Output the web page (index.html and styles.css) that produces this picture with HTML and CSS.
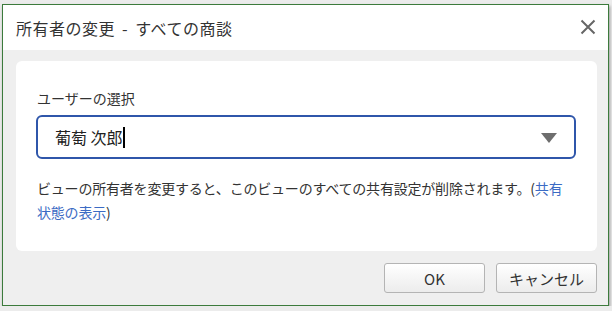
FILE: index.html
```html
<!DOCTYPE html>
<html lang="ja">
<head>
  <meta charset="UTF-8">
  <title>所有者の変更</title>
  <link rel="stylesheet" href="styles.css">
</head>
<body>
<div class="dlg">
  <div class="dlg-hd">
    <h1>所有者の変更 - すべての商談</h1>
    <span class="close"><svg width="16" height="16" viewBox="0 0 16 16"><path d="M1.5 1.5L14.5 14.5M14.5 1.5L1.5 14.5" stroke="#666" stroke-width="2" fill="none"/></svg></span>
  </div>
  <div class="dlg-bd">
    <div class="card">
      <p class="lbl">ユーザーの選択</p>
      <div class="sel">
        <span class="val">葡萄 次郎<span class="caret"></span></span>
        <span class="arrow"></span>
      </div>
      <p class="note">ビューの所有者を変更すると、このビューのすべての共有設定が削除されます。(<a href="#">共有状態の表示</a>)</p>
    </div>
    <div class="btns">
      <button type="button">OK</button>
      <button type="button">キャンセル</button>
    </div>
  </div>
</div>
</body>
</html>
```

FILE: styles.css
```css
*{margin:0;padding:0;box-sizing:border-box;}
body{
  background:#ececec;
  color:#333;
  font-family:"Noto Sans CJK JP","Noto Sans",sans-serif;
  font-size:14px;
}
.dlg{
  margin:4px 0 0 2px;
  width:607px;
  height:302px;
  border:1px solid #3c7b3c;
  background:#efefef;
  box-shadow:1px 2px 3px rgba(0,0,0,.35);
  display:flex;
  flex-direction:column;
}
.dlg-hd{
  height:45px;
  background:#fff;
  display:flex;
  align-items:center;
  justify-content:space-between;
  padding:0 12px 0 13px;
}
.dlg-hd h1{font-size:16px;font-weight:normal;color:#333;letter-spacing:.5px;word-spacing:3px;}
.close{display:flex;margin-top:-2px;}
.dlg-bd{flex:1;padding:11px 11px 12px 13px;display:flex;flex-direction:column;}
.card{
  background:#fff;
  border-radius:6px;
  height:190px;
  padding:27px 21px 0 20px;
}
.lbl{line-height:20px;margin-bottom:7px;padding-left:1px;}
.sel{
  height:44px;
  border:2px solid #2f56aa;
  border-radius:6px;
  display:flex;
  align-items:center;
  justify-content:space-between;
  padding:0 17px 0 17px;
}
.val{font-size:16px;color:#222;display:flex;align-items:center;}
.caret{display:inline-block;width:2px;height:21px;background:#000;}
.arrow{
  width:0;height:0;
  border-left:8px solid transparent;
  border-right:8px solid transparent;
  border-top:10px solid #6e6e6e;
  margin-top:2px;
}
.note{margin-top:17px;line-height:24px;padding-left:1px;letter-spacing:-.2px;}
.note a{color:#3b6bc4;text-decoration:none;}
.btns{margin-top:12px;display:flex;justify-content:flex-end;gap:11px;}
.btns button{
  width:101px;
  height:30px;
  border:1px solid #b4b4b4;
  border-radius:3px;
  background:linear-gradient(#fff,#ececec);
  font-family:"Noto Sans CJK JP","Noto Sans",sans-serif;
  font-size:15px;
  color:#333;
}
```
